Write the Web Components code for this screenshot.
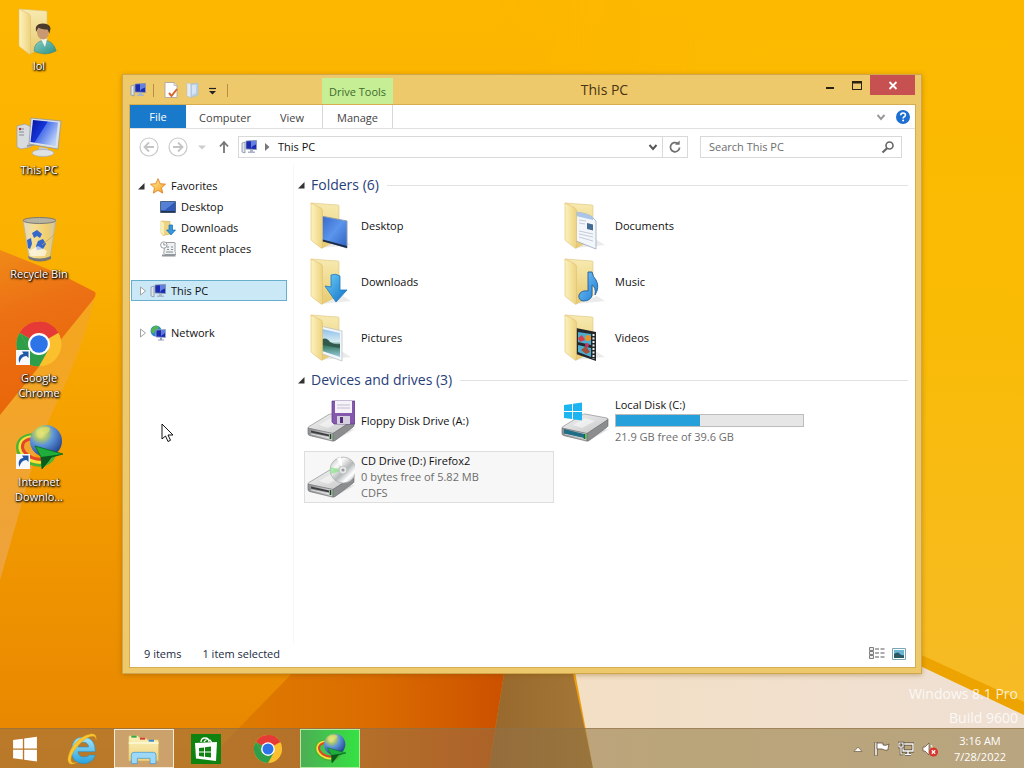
<!DOCTYPE html>
<html lang="en">
<head>
<meta charset="utf-8">
<title>This PC</title>
<style>
html, body { margin: 0; height: 100%; }
body {
  font: 11px/16px "Open Sans", "Noto Sans", sans-serif;
  overflow: hidden;
  background: #fbb300;
}
</style>
</head>
<body>
<win-desktop></win-desktop>
<script>
const folder = `
  <linearGradient id="fb" x2="0" y2="1"><stop stop-color="#f7eab0"/><stop offset="1" stop-color="#e8ca70"/></linearGradient>
  <linearGradient id="ff" x2="1" y2="0"><stop stop-color="#fdf3be"/><stop offset="1" stop-color="#edd27e"/></linearGradient>
  <path d="M14 46l30-3-8-5z" fill="#000" opacity=".08"/>
  <path d="M4 1l27 2q1 0 1 1v34l-17 8z" fill="url(#fb)" stroke="#dcc27a" stroke-width=".6"/>`;
const flap = `<path d="M4 1l10 5q1.500 1 1.500 3v36q0 2-1.500 1L5 39q-1-1-1-2z" fill="url(#ff)" stroke="#dfc072" stroke-width=".6"/>`;
const drive = `
  <linearGradient id="dt" x2="1" y2="1"><stop stop-color="#f4f4f4"/><stop offset="1" stop-color="#c3c4c5"/></linearGradient>
  <linearGradient id="df" x2="1" y2="0"><stop stop-color="#8c8f92"/><stop offset="1" stop-color="#d4d4d4"/></linearGradient>
  <path d="M4 39l22 6 22-13z" opacity=".12"/>
  <path d="M1 31q0-1 1-1.500L21 18q1.500-1 3-1l22 4q1.500.5 1 2L27 36q-1 .7-2 .5L2 32z" fill="url(#dt)" stroke="#8d8f91" stroke-width=".7"/>
  <path d="M12 28l12-7 10 3-13 7z" fill="#fff" opacity=".5"/>
  <path d="M1 31l25 5.500v7.500L2.500 38.500Q1 38 1 36.500z" fill="url(#df)" stroke="#777" stroke-width=".7"/>
  <path d="M26 36.500L47 22.500v6q0 1-1 1.700L28 43.500q-1 .7-2 .5z" fill="#8b8d8f" stroke="#66686a" stroke-width=".6"/>
  <path d="M4 33.500l18 4v2l-18-4z" fill="#3c3e40"/><path d="M4 36.500l18 4v.8l-18-4z" fill="#eee"/>
  <path d="M23.500 37v5" stroke="#333" stroke-width="1.500"/><path d="M25 38v4" stroke="#35c94a" stroke-width=".8"/>`;
const pc16 = `
  <path d="M1 4l3-1v11l-3-1z" fill="#dfe5ec" stroke="#8793a3" stroke-width=".8"/>
  <path d="M5 2l10.500-.5v9L5 10z" fill="#1a2bb0" stroke="#8d9ab5" stroke-width=".8"/>
  <path d="M10 2l5 0v3.500q-4 1-5 4z" fill="#7c9cf0" opacity=".75"/>
  <path d="M9 10.500h3v2h2v1.500H7v-1.500h2z" fill="#a9b5c8"/>`;
const chrome = `
  <circle cx="24" cy="24" r="22.500" fill="#fbc02d"/>
  <path d="M24 24L4.500 12.750A22.500 22.500 0 0 1 43.500 12.750z" fill="#e53a35"/>
  <path d="M24 1.500A22.500 22.500 0 0 1 43.500 13H24z" fill="#e53a35"/>
  <path d="M4.500 12.750A22.500 22.500 0 0 0 24 46.500L33.500 29.500 14.500 29.500z" fill="#2f9e4a"/>
  <path d="M4.500 12.750L14.500 30 24 24z" fill="#2f9e4a"/>
  <circle cx="24" cy="24" r="11" fill="#fff"/><circle cx="24" cy="24" r="8.800" fill="#2d74e8"/>`;
const idm = `
  <radialGradient id="gl" cx=".35" cy=".25" r=".85"><stop stop-color="#f3f3a0"/><stop offset=".25" stop-color="#a9c470"/><stop offset=".45" stop-color="#5e95da"/><stop offset="1" stop-color="#16337f"/></radialGradient>
  <g fill="none"><ellipse cx="21" cy="26" rx="19" ry="14.500" transform="rotate(20 21 26)" stroke="#4bb535" stroke-width="3"/>
  <ellipse cx="21" cy="25.500" rx="16.500" ry="12" transform="rotate(20 21 25.500)" stroke="#f4e33a" stroke-width="3"/>
  <ellipse cx="21" cy="25" rx="14" ry="9.500" transform="rotate(20 21 25)" stroke="#e2452a" stroke-width="3"/></g>
  <circle cx="31" cy="17" r="16" fill="url(#gl)"/>
  <path d="M22 6q8-5 13-2 0 5-6 6-1 5-5 4-4-3-2-8z" fill="#dfe06a" opacity=".7"/>
  <path d="M20 22l28 8-11 3-10 12-1-12z" fill="#1fae3c" stroke="#086821" stroke-width=".8"/>
  <path d="M26 33l22-3-11 3-10 12z" fill="#0a5c1c"/>`;
const shortcut = `<path d="M1 30h14v15H1z" fill="#f8f8fa"/><path d="M4.500 43c-2-5 0-9 4-9l-1.500-2.500h6.500v6.500l-2-2c-4 0-6 3-7 7z" fill="#1e56a8"/>`;

const ICONS = {
  user: [48, folder + flap + `
    <linearGradient id="sh" x2="1" y2="1"><stop stop-color="#86cfc0"/><stop offset="1" stop-color="#2f8f86"/></linearGradient>
    <path d="M19 43q0-9 10-11 10 1 12 11-11 6-22 0z" fill="url(#sh)" stroke="#3b8179" stroke-width=".5"/>
    <path d="M26 31h6l-2 8z" fill="#f2f5f2"/>
    <ellipse cx="28" cy="24" rx="6" ry="7.500" fill="#c99a72"/>
    <path d="M21 24q-2-8 6-8.500 8 0 8.500 5l-1 5-2-4q-6 0-9-2z" fill="#4a3a2a"/>`],
  computer: [48, `
    <linearGradient id="sc" x2="1" y2=".6"><stop stop-color="#0714a0"/><stop offset=".48" stop-color="#1535d8"/><stop offset=".5" stop-color="#4a70ea"/><stop offset="1" stop-color="#b9cff8"/></linearGradient>
    <path d="M2 14l8-2 6 3v20L6 37l-4-2z" fill="#d9dcdf" stroke="#9ba0a6" stroke-width=".7"/>
    <path d="M4 17l5 0M4 20h5M4 23h5" stroke="#858b92"/><circle cx="5" cy="17" r="1.200" fill="#b33"/>
    <path d="M12 34l9-2" stroke="#999" stroke-width="2"/>
    <path d="M16 6l30 3-3 28-29-5z" fill="#dde1e5" stroke="#8f98a1" stroke-width=".8"/>
    <path d="M18 8l25 2.500-2.500 23.500L15.500 30z" fill="url(#sc)"/>
    <path d="M24 35l9 1.500v4l-9-1z" fill="#c5cad0"/><ellipse cx="28" cy="41" rx="11" ry="3.500" fill="#dfe2e5" stroke="#a5abb1" stroke-width=".7"/>`],
  recycle: [48, `
    <linearGradient id="bn" x2="1" y2="0"><stop stop-color="#dcdcdc"/><stop offset=".3" stop-color="#f5e5ae"/><stop offset=".75" stop-color="#eed27e"/><stop offset="1" stop-color="#c7c7c7"/></linearGradient>
    <path d="M8 4h33l-6 38q-10 5-21 0z" fill="url(#bn)" stroke="#b9b3a0" stroke-width=".8" opacity=".88"/>
    <ellipse cx="24.500" cy="4.500" rx="16.500" ry="3" fill="#b8b2a0" stroke="#7d7a70"/>
    <path d="M13 40q11 5 23 0v3q-11 5-22 0z" fill="#777"/>
    <path d="M17 17l5-3 5 4-2 4-3-2-3 2zM12 24l4-2 1 6-2 5-2-1zM21 30l2-5 5-2 3 5-3 5-6 1z" fill="#3467c9"/>
    <path d="M14 35l9-5 9 5-2 5-14 0z" fill="#fff" opacity=".6"/>
    <path d="M27 29l12-10" stroke="#c9a751" stroke-width=".8"/>`],
  chromeLink: [48, chrome + shortcut],
  idmLink: [48, idm + shortcut],
  chrome: [48, chrome],
  idm: [48, idm],
  fDesktop: [48, folder + `
    <linearGradient id="ds" x2="1" y2="1"><stop stop-color="#3765c8"/><stop offset=".5" stop-color="#5b95ec"/><stop offset="1" stop-color="#2f61c2"/></linearGradient>
    <path d="M14 14l26 5v27l-26-8z" fill="url(#ds)" stroke="#8a9fb0"/><path d="M14 37l26 7v2l-26-7z" fill="#1d2c4a"/>` + flap],
  fDownloads: [48, folder + flap + `
    <linearGradient id="ar" x2="1" y2="1"><stop stop-color="#6fd0fa"/><stop offset="1" stop-color="#0f6fc5"/></linearGradient>
    <path d="M24 17q5-2 9 1l0 14h7L29 44 18 28l6 1z" fill="url(#ar)" stroke="#1a78bd" stroke-width=".8"/>`],
  fPictures: [48, folder + `
    <linearGradient id="pi" x2="0" y2="1"><stop stop-color="#8fc0ea"/><stop offset=".45" stop-color="#d6ebf2"/><stop offset=".6" stop-color="#397b62"/><stop offset="1" stop-color="#9ccbe0"/></linearGradient>
    <path d="M13 12l22 5v30l-22-8z" fill="#f4f7fa" stroke="#a9b4bd" stroke-width=".6"/><path d="M15 15l18 4v24l-18-6z" fill="url(#pi)"/><path d="M15 25q5-2 8 3 5 3 10 2v4l-18-3z" fill="#31594d"/>` + flap],
  fDocuments: [48, folder + `
    <path d="M15 10q10 1 15 4l5 5v28l-20-8z" fill="#f3f6fb" stroke="#9ba8bb" stroke-width=".8"/>
    <path d="M15 10q10 1 17 5v3l-17-4z" fill="#a9c6ea"/>
    <path d="M18 18l7 1M18 21l6 1M18 29l14 3M18 32l14 3M18 35l14 4" stroke="#c0c6d2" stroke-width=".9"/>
    <path d="M26 21l6 1.500v6l-6-1.500z" fill="#446b93"/>` + flap],
  fMusic: [48, folder + flap + `
    <linearGradient id="mu" x2="1" y2="1"><stop stop-color="#7fc6f5"/><stop offset="1" stop-color="#1c7fd6"/></linearGradient>
    <path d="M27 14h4q1 5 4 8 4 7-1 15 1-8-3-10v10q-1 6-9 6-5-1-4-6 2-5 9-4z" fill="url(#mu)" stroke="#235f9c" stroke-width=".9"/>`],
  fVideos: [48, folder + `
    <path d="M15 14l20 4v29l-20-7z" fill="#24282d"/>
    <path d="M17 18l13 2v11l-13-3zM17 31l13 3v9l-13-5z" fill="#4daed0"/>
    <path d="M17 24l4-3 3 5-5 2z" fill="#d83e4e"/><circle cx="27" cy="24" r="3" fill="#e5942c"/><path d="M20 36l5-4 4 6-4 2z" fill="#a6503b"/><circle cx="26" cy="31" r="2" fill="#c6346a"/>
    <path d="M32.500 20v25" stroke="#eee" stroke-width="2" stroke-dasharray="2 1.500"/>` + flap],
  floppy: [48, drive + `
    <path d="M25 4h23v23H27l-2-2z" fill="#8459ad" stroke="#5e3b87" stroke-width=".7"/>
    <path d="M28 4h17v12H28z" fill="#f5f3f8"/><path d="M30 8h13M30 11h13" stroke="#c4bad2"/>
    <path d="M30 19h13v8H30z" fill="#d5cfdf"/><path d="M33 20h3v6h-3z" fill="#54327c"/>`],
  cd: [48, drive + `
    <linearGradient id="cg" x2="1" y2="1"><stop stop-color="#aeb2b2"/><stop offset=".3" stop-color="#fafafa"/><stop offset=".55" stop-color="#b4b8b8"/><stop offset=".75" stop-color="#fff"/><stop offset="1" stop-color="#9fa3a3"/></linearGradient>
    <circle cx="36" cy="17" r="13" fill="url(#cg)" stroke="#a9acac" stroke-width=".7"/>
    <path d="M36 17L23.500 14q-.8 4 .5 7z" fill="#7fe07f" opacity=".65"/><path d="M36 17L30 5.500 34 4z" fill="#fff"/>
    <circle cx="36" cy="17" r="4" fill="#e6e8e8" stroke="#b2b5b5" stroke-width=".7"/><circle cx="36" cy="17" r="1.600" fill="#999"/>`],
  local: [48, drive + `
    <path d="M3 32l20 5v4L3 36.500z" fill="#206d86"/><path d="M24.500 37v5" stroke="#42d24e" stroke-width="1.500"/>
    <path d="M3 8l8-1v7H3zM12 6.800L21 5.500V14h-9zM3 15h8v7l-8-1zM12 15h9v8.500L12 22.200z" fill="#1cb5f2"/>`],
  pc: [16, pc16],
  star: [16, `<linearGradient id="st" x2="1" y2="1"><stop stop-color="#fff2a0"/><stop offset="1" stop-color="#f39a1c"/></linearGradient>
    <path d="M8 .7l2.200 5 5.300.5-4 3.600 1.200 5.300L8 12.300l-4.700 2.800 1.200-5.300-4-3.600 5.300-.5z" fill="url(#st)" stroke="#e08226" stroke-width=".9"/>`],
  screen: [16, `<path d="M.5 2.500h15v11H.5z" fill="#3159b8" stroke="#4c6480"/><path d="M1 3h14L5 11H1z" fill="#6d9bea" opacity=".6"/><path d="M1 12h14v1.500H1z" fill="#22344e"/>`],
  down: [16, `<path d="M1 1l9 .5V14l-7 1.500L1 13z" fill="#edd484" stroke="#cfae58" stroke-width=".6"/><path d="M1 1l3 2v12.500L1 13z" fill="#fbeeb2"/><path d="M9 5h3.500v5H15.500l-4.500 5-4.500-5H9z" fill="#3597dc" stroke="#1c6cb0" stroke-width=".7"/>`],
  recent: [16, `<path d="M5 1.500h9q2 0 1 2v7q1 1 1 3H5q-2-1-1-3z" fill="#f0f1f2" stroke="#8e9499" stroke-width=".9"/><circle cx="3.800" cy="4" r="3.200" fill="#fff" stroke="#8e9499" stroke-width=".9"/><path d="M3.800 2v2h1.700M7 6h2M11 6h2M7 8.500h2M11 8.500h2M6 11h7" stroke="#7c8287" fill="none" stroke-width=".9"/><path d="M2 13.500h13.500v2H2z" fill="#8e9499"/>`],
  network: [16, `<circle cx="6" cy="6" r="5.500" fill="#3187c9"/><path d="M2 3q4-4 7-1-1 3-4 3 0 4-3 3-2-2 0-5z" fill="#4fb555"/><path d="M6 5l9.500-.5v8L6 12z" fill="#1a2bb0" stroke="#a3b0c5" stroke-width=".8"/><path d="M11 5h4v3l-4 3z" fill="#7c9cf0" opacity=".7"/><path d="M10 12.500h2v2h2v1H8v-1h2z" fill="#8fa0b8"/>`],
  props: [16, `<path d="M2 .5h9l3 3v12H2z" fill="#fdfdfd" stroke="#a99f9a" stroke-width=".8"/><path d="M11 .5v3h3" fill="#ddd" stroke="#aaa" stroke-width=".6"/><path d="M6 11l2.500 3L14 7" fill="none" stroke="#d8652b" stroke-width="2"/>`],
  newFolder: [16, `<path d="M2 1l4 1v13.500L2 14z" fill="#e4edf6" stroke="#b3c3d4" stroke-width=".5"/><path d="M6 2l7-1v12l-7 2.500z" fill="#b9cfe6" stroke="#a3b9d1" stroke-width=".5"/><path d="M7 3h4v8l-4 2z" fill="#d7e4f1"/>`],
  caret: [16, `<path d="M5 6.500h7" stroke="#222" stroke-width="1.200"/><path d="M5 9h7l-3.500 3.500z" fill="#222"/>`],
  min: [16, `<path d="M4 10h8v2H4z" fill="#2c2112"/>`],
  max: [16, `<path d="M3 4h10v9H3zM4 6.500v5.500h8V6.500z" fill="#2c2112" fill-rule="evenodd"/>`],
  close: [16, `<path d="M4.500 5l7 7M11.500 5l-7 7" stroke="#fff" stroke-width="1.800"/>`],
  chevron: [16, `<path d="M4.500 6l3.500 4 3.500-4" fill="none" stroke="currentColor" stroke-width="1.900"/>`],
  help: [16, `<circle cx="8" cy="8" r="7" fill="#1c6fd0"/><path d="M5.700 6.300q0-2.300 2.400-2.300 2.300 0 2.300 2 0 1.300-1.400 2-.9.500-.9 1.500" fill="none" stroke="#fff" stroke-width="1.600"/><circle cx="8.100" cy="11.600" r="1" fill="#fff"/>`],
  back: [20, `<circle cx="10" cy="10" r="9" fill="none" stroke="#c9c9c9" stroke-width="1.200"/><path d="M15 10H6M10 5.500L5.500 10l4.500 4.500" fill="none" stroke="#c4c4c4" stroke-width="1.800"/>`],
  forward: [20, `<circle cx="10" cy="10" r="9" fill="none" stroke="#c9c9c9" stroke-width="1.200"/><path d="M5 10h9M10 5.500l4.500 4.500-4.500 4.500" fill="none" stroke="#c4c4c4" stroke-width="1.800"/>`],
  tinyDown: [16, `<path d="M4 6.500h8l-4 4z" fill="#cdcdcd"/>`],
  up: [16, `<path d="M8 14V3M4 7.500L8 3l4 4.500" fill="none" stroke="#757575" stroke-width="1.800"/>`],
  crumb: [16, `<path d="M6 4l4.500 4L6 12z" fill="#777"/>`],
  refresh: [16, `<path d="M10.800 4.500a4.600 4.600 0 1 0 1.800 4" fill="none" stroke="#707070" stroke-width="1.700"/><path d="M8 5.800h4.700V1.500z" fill="#707070"/>`],
  search: [16, `<circle cx="9.500" cy="6.500" r="3.500" fill="none" stroke="#666" stroke-width="1.600"/><path d="M7 9.300L2.500 13.500" stroke="#666" stroke-width="2.200"/>`],
  open: [16, `<path d="M10.500 5v6.500H4z" fill="#333"/>`],
  closed: [16, `<path d="M6.500 4l5 4-5 4z" fill="#fff" stroke="#a3a3a3"/>`],
  details: [16, `<path d="M.5 1.500h4v3h-4zM.5 5.500h4v3h-4zM.5 9.500h4v3h-4z" fill="#eee" stroke="#6f6f6f" stroke-width=".9"/><path d="M6 3h4M11.500 3h4M6 7h4M11.500 7h4M6 11h4M11.500 11h4" stroke="#5b5b5b" stroke-width="1.200"/>`],
  tiles: [16, `<path d="M1.500 2.500h13v11h-13z" fill="#fff" stroke="#7aa5b5"/><path d="M3 4h10v8H3z" fill="#68b4d4"/><path d="M3 8q4-3 6 0 2 2 4 1v3H3z" fill="#2a5864"/>`],
  start: [48, `<path d="M2 7.500l18-2.500v18H2zM22.500 4.700L46 1.500V23H22.500zM2 25.500h18v18L2 41zM22.500 25.500H46v21.500L22.500 43.800z" fill="#fff"/>`],
  ie: [48, `<linearGradient id="ie" x2="0" y2="1"><stop stop-color="#a4e6fa"/><stop offset="1" stop-color="#2aa3df"/></linearGradient>
    <path d="M44 28H18q1 8 9 8 6 0 8-3h9q-4 13-18 13Q8 45 8 26 9 6 26 6q18 1 18 22zM18 21H34q-1-7-8-7-7 0-8 7z" fill="url(#ie)" stroke="#2a86b8" stroke-width=".8" fill-rule="evenodd"/>
    <path d="M45 11q2-10-7-10Q19 4 7 25-2 45 8 47q4 0 9-3-7 2-9-1Q5 34 18 19 32 4 41 5q4 1 4 6z" fill="#f9c531" stroke="#d79a17" stroke-width=".6"/>`],
  explorer: [48, `<linearGradient id="ex" x2="0" y2="1"><stop stop-color="#fbf2bd"/><stop offset="1" stop-color="#eed27c"/></linearGradient>
    <path d="M1 6q0-2 2-2h12l2 3h10l2 3h15q2 0 2 2v30H1z" fill="url(#ex)" stroke="#d5b45a"/>
    <path d="M5 4h8v3H5z" fill="#38a845"/><path d="M18 7h8v3h-8z" fill="#d33c33"/><path d="M31 10h8v3h-8z" fill="#3686d1"/><path d="M1 15h45" stroke="#fffbe0" stroke-width="2"/>
    <path d="M5 46V33q0-4 4-4h29q4 0 4 4v13h-9V38H14v8z" fill="#9dd8f6" stroke="#3f93cc"/>`],
  store: [30, `<path d="M0 0h30v30H0z" fill="#10820f"/><path d="M10 8q0-4 4-4t4 4M13 8q2-4 6-2l2 3" fill="none" stroke="#fff" stroke-width="1.300"/><path d="M4 9l22-1-1 19-20-2.500z" fill="#fff"/><path d="M8 14l5-.6v4.100H8zM14 13.200l6-.7v5h-6zM8 18.500h5v4.200l-5-.6zM14 18.500h6v5l-6-.7z" fill="#10820f"/>`],
  trayUp: [16, `<path d="M4 10.500h8L8 6z" fill="#fff" stroke="#6b5b46" stroke-width=".7"/>`],
  flag: [16, `<path d="M2 1v14" stroke="#5d4d39" stroke-width="3"/><path d="M2 1.500v13" stroke="#fff" stroke-width="1.600"/><path d="M3 2h6v2q3 1 6-1-1 4-1 6-3 1-6-1H3z" fill="#fff" stroke="#5d4d39" stroke-width=".8"/>`],
  net: [16, `<path d="M5 3h10v7H5zM10 10v3M7 13.500h6" fill="none" stroke="#4f4333" stroke-width="2.800"/><path d="M5 3h10v7H5zM10 10v3M7 13.500h6" fill="none" stroke="#fff" stroke-width="1.400"/><path d="M1 2h4v4H1zM3 6v7h2" fill="none" stroke="#4f4333" stroke-width="2.400"/><path d="M1 2h4v4H1zM3 6v7h2" fill="none" stroke="#fff" stroke-width="1.200"/>`],
  mute: [16, `<path d="M1 6h2l4-4v12l-4-4H1z" fill="#fff" stroke="#5d4d39" stroke-width=".7"/><path d="M9 4q2 2 1 5" stroke="#fff" fill="none"/><circle cx="11.500" cy="11" r="4.500" fill="#d8352c"/><path d="M9.800 9.300l3.400 3.400M13.200 9.300l-3.400 3.400" stroke="#fff" stroke-width="1.300"/>`],
  cursor: [20, `<path d="M1 1v15l3.500-3L7 18.500l2.500-1.200L7 12h5z" fill="#fff" stroke="#111" stroke-width="1"/>`]
};

function define(name, html) {
  customElements.define(name, class extends HTMLElement {
    connectedCallback() {
      if (this.shadowRoot) return;
      const t = document.createElement('template');
      t.innerHTML = typeof html === 'function' ? html(this) : html;
      this.attachShadow({ mode: 'open' }).append(t.content.cloneNode(true));
    }
  });
}
const a = (el, n) => el.getAttribute(n) || '';

define('ui-icon', el => {
  const [box, art] = ICONS[a(el, 'name')];
  const size = a(el, 'size') || box;
  return `<style>:host{display:inline-block;flex:none;width:${size}px;height:${size}px}svg{display:block;width:100%;height:100%}</style>
  <svg viewBox="0 0 ${box} ${box}" aria-hidden="true">${art}</svg>`;
});

define('wall-paper', `<style>:host{display:block;position:absolute;inset:0;z-index:-1}svg{display:block;width:100%;height:100%}</style>
<svg viewBox="0 0 1024 768" preserveAspectRatio="none" aria-hidden="true">
  <defs>
    <linearGradient id="bg" x2="0" y2="1"><stop stop-color="#fdb700"/><stop offset=".35" stop-color="#fab000"/><stop offset=".62" stop-color="#f39c00"/><stop offset="1" stop-color="#e78500"/></linearGradient>
    <linearGradient id="leaf" x2=".2" y2="1"><stop stop-color="#f08a18"/><stop offset=".4" stop-color="#ec7014"/><stop offset="1" stop-color="#e86608"/></linearGradient>
    <linearGradient id="band" x2="0" y2="1"><stop stop-color="#f5a61c"/><stop offset=".5" stop-color="#f2a52c"/><stop offset="1" stop-color="#eda23e"/></linearGradient>
    <linearGradient id="red" x2="1" y2="0"><stop stop-color="#df7e00"/><stop offset=".55" stop-color="#db6d00"/><stop offset="1" stop-color="#cb5000"/></linearGradient>
    <linearGradient id="brown" x2="1" y2="0"><stop stop-color="#98682c"/><stop offset="1" stop-color="#a47838"/></linearGradient>
    <linearGradient id="cream" x2="1" y2="0"><stop stop-color="#f3dfc4"/><stop offset="1" stop-color="#efe0d4"/></linearGradient>
    <linearGradient id="side" x2="0" y2="1"><stop stop-color="#fcb900"/><stop offset=".4" stop-color="#fabb04"/><stop offset="1" stop-color="#f5bb2c"/></linearGradient>
    <linearGradient id="fade" x2="1" y2="0"><stop stop-color="#fff" stop-opacity="0"/><stop offset=".4" stop-color="#fff"/></linearGradient>
    <mask id="right"><path d="M500 0h524v768H500z" fill="url(#fade)"/></mask>
  </defs>
  <path fill="url(#bg)" d="M0 0h1024v768H0z"/>
  <path fill="url(#side)" d="M500 0h524v768H500z" mask="url(#right)"/>
  <path fill="url(#band)" d="M95 297Q82 350 58 400 38 440 20 510L0 580V400z"/>
  <path fill="url(#leaf)" d="M0 250l60 24 35 18q2 3-3 9L0 415z"/>
  <path fill="url(#red)" d="M310 655h197l-18 113H200z"/>
  <path fill="url(#brown)" d="M507 655h62l24 113H489z"/>
  <path fill="url(#cream)" d="M569 640h310l145 72v56H593z"/>
  <path fill="#eda400" d="M880 636l144 66v13L880 647z"/>
</svg>`);

define('desk-icon', el => `<style>
:host{display:block}
a{display:flex;flex-direction:column;align-items:center;gap:2px;height:104px;color:#fff;text-decoration:none;text-align:center;line-height:15px;
 text-shadow:1px 1px 2px #000,0 1px 2px #000,1px 0 1px #000a}
</style><a href="#${a(el, 'icon')}"><ui-icon name="${a(el, 'icon')}"></ui-icon><span><slot></slot></span></a>`);

define('tool-button', el => `<style>
:host{display:flex}
button{flex:1;display:flex;align-items:center;justify-content:center;width:100%;height:100%;margin:0;padding:0;border:0;background:none;color:inherit;font:inherit}
</style><button type="button" aria-label="${a(el, 'label')}"><ui-icon name="${a(el, 'icon')}" ${a(el, 'size') ? `size="${a(el, 'size')}"` : ''}></ui-icon></button>`);

define('title-bar', `<style>
:host{display:flex;height:30px;color:#4b3413}
.quick{display:flex;align-items:center;width:192px}
.quick tool-button{width:22px}
.quick .app{width:16px}
i{width:1px;height:13px;margin:0 6px 0 7px;background:#b98b45}
.tools{box-sizing:border-box;width:71px;height:27px;margin-top:3px;background:#c5ee95;color:#3f6b2c;text-align:center;line-height:27px}
h1{flex:1;margin:0;text-align:center;font-size:14px;font-weight:400;line-height:30px}
.caption{display:flex;height:20px}
.caption tool-button{width:27px}
.caption .close{width:45px;background:#c75050}
</style>
<div class="quick"><tool-button class="app" icon="pc" label="System menu"></tool-button><i></i>
<tool-button icon="props" label="Properties"></tool-button><tool-button icon="newFolder" label="New folder"></tool-button><tool-button class="app" icon="caret" label="Customize toolbar"></tool-button><i></i></div>
<div class="tools">Drive Tools</div><h1>This PC</h1>
<div class="caption"><tool-button icon="min" label="Minimize"></tool-button><tool-button icon="max" label="Maximize"></tool-button><tool-button class="close" icon="close" label="Close"></tool-button></div>`);

define('ribbon-tabs', `<style>
:host{display:flex;align-items:center;height:23px;border-bottom:1px solid #dfe0e2;color:#444}
button{height:23px;margin:0;padding:2px 0 0;border:0;background:none;font:inherit;color:inherit;text-align:center}
.file{width:56px;padding:0;background:#1979ca;color:#fff}
.c{width:78px}.v{width:56px}
.m{box-sizing:border-box;width:71px;margin-left:2px;border:solid #d8d8d8;border-width:0 1px}
.end{display:flex;gap:6px;margin:0 4px 0 auto;color:#999}
</style>
<button class="file" type="button">File</button><button class="c" type="button">Computer</button><button class="v" type="button">View</button><button class="m" type="button">Manage</button>
<div class="end"><tool-button icon="chevron" label="Minimize the ribbon"></tool-button><tool-button icon="help" label="Help"></tool-button></div>`);

define('address-row', `<style>
:host{display:flex;align-items:center;height:36px;padding:0 13px 0 9px;color:#111}
.fwd{margin-left:9px}.drop{margin-left:6px}.up{margin:0 6px}
.bar,.search{box-sizing:border-box;display:flex;align-items:center;height:22px;border:1px solid #d9d9d9;background:#fff}
.bar{flex:1;padding-left:2px}
.bar button{padding:0;border:0;background:none;font:inherit;color:inherit}
.bar .crumb{margin:0 3px 0 2px}
.list{margin:0 1px 0 auto;color:#555}
.refresh{width:24px;height:20px;border-left:1px solid #d9d9d9}
.search{width:202px;margin-left:12px;padding:0 5px 0 8px}
input{flex:1;min-width:0;padding:0;border:0;outline:0;background:none;font:inherit;color:#333}
input::placeholder{color:#6d6d6d;opacity:1}
</style>
<tool-button icon="back" label="Back"></tool-button><tool-button class="fwd" icon="forward" label="Forward"></tool-button><tool-button class="drop" icon="tinyDown" label="Recent locations"></tool-button><tool-button class="up" icon="up" label="Up"></tool-button>
<div class="bar"><ui-icon name="pc"></ui-icon><ui-icon class="crumb" name="crumb"></ui-icon><button type="button">This PC</button>
<tool-button class="list" icon="chevron" label="Previous locations"></tool-button><tool-button class="refresh" icon="refresh" label="Refresh"></tool-button></div>
<div class="search"><input type="search" aria-label="Search This PC" placeholder="Search This PC"><tool-button icon="search" label="Search"></tool-button></div>`);

define('tree-item', el => `<style>
:host{display:block}
a{box-sizing:border-box;display:flex;align-items:center;height:21px;padding-left:${el.hasAttribute('child') ? 28 : 2}px;border:1px solid transparent;color:#111;text-decoration:none;white-space:nowrap}
:host([selected]) a{background:#cbe8f6;border-color:#68aecd}
:host([gap]){margin-top:21px}
span{margin-left:5px}
</style><a href="#${a(el, 'icon')}">${a(el, 'arrow') ? `<ui-icon name="${a(el, 'arrow')}"></ui-icon>` : ''}<ui-icon name="${a(el, 'icon')}"></ui-icon><span><slot></slot></span></a>`);

define('nav-pane', `<style>
:host{display:block;box-sizing:border-box;width:164px;padding:10px 6px 0 1px;border-right:1px solid #f7f7f7}
nav{display:block}
</style><nav aria-label="Locations">
<tree-item arrow="open" icon="star">Favorites</tree-item>
<tree-item child icon="screen">Desktop</tree-item>
<tree-item child icon="down">Downloads</tree-item>
<tree-item child icon="recent">Recent places</tree-item>
<tree-item gap selected arrow="closed" icon="pc">This PC</tree-item>
<tree-item gap arrow="closed" icon="network">Network</tree-item>
</nav>`);

define('file-tile', el => `<style>
:host{display:flex;align-items:center;box-sizing:border-box;height:52px;padding:0 2px;gap:6px;border:1px solid transparent;color:#111}
:host([selected]){background:#f7f7f7;border-color:#dedede}
div{flex:1}
::slotted(*){color:#6d6d6d;display:block}
</style><ui-icon name="${a(el, 'icon')}"></ui-icon><div>${a(el, 'name')}<slot></slot></div>`);

define('capacity-bar', `<style>
:host{display:block}
progress{appearance:none;display:block;box-sizing:border-box;width:189px;height:13px;margin:1px 0 2px;border:1px solid #bcbcbc}
progress::-webkit-progress-bar{background:#e6e6e6}
progress::-webkit-progress-value{background:#26a0da}
</style><progress max="100" value="45" aria-label="Space used"></progress>`);

define('tile-group', el => `<style>
:host{display:block;margin-bottom:3px}
h2{display:flex;align-items:center;height:26px;margin:0 0 2px;color:#27407a;font-size:14px;font-weight:400;line-height:26px}
h2 span{margin:0 8px 0 1px}
h2::after{content:"";flex:1;height:1px;background:#e2e2e2}
.grid{display:grid;grid-template-columns:repeat(auto-fill,250px);gap:4px;padding-left:10px}
</style><h2><ui-icon name="open"></ui-icon><span>${a(el, 'heading')}</span></h2><div class="grid"><slot></slot></div>`);

define('status-bar', `<style>
:host{display:flex;align-items:center;gap:21px;height:22px;padding:0 8px 2px 14px;color:#222b40}
.views{display:flex;gap:6px;margin-left:auto}
</style><span>9 items</span><span>1 item selected</span><div class="views"><tool-button icon="details" label="Details"></tool-button><tool-button icon="tiles" label="Large icons"></tool-button></div>`);

define('explorer-window', `<style>
:host{display:flex;flex-direction:column;box-sizing:border-box;padding:0 6px 6px 7px;border:1px solid #cfa64e;background:#edc96c;box-shadow:0 1px 5px #7a500066}
.body{flex:1;display:flex;flex-direction:column;min-height:0;background:#fff;outline:1px solid #d6ac50}
.split{flex:1;display:flex;min-height:0}
main{flex:1;min-width:0;padding:7px 7px 0 0}
</style>
<title-bar></title-bar>
<div class="body"><ribbon-tabs></ribbon-tabs><address-row></address-row>
<div class="split"><nav-pane></nav-pane><main>
<tile-group heading="Folders (6)">
<file-tile icon="fDesktop" name="Desktop"></file-tile><file-tile icon="fDocuments" name="Documents"></file-tile>
<file-tile icon="fDownloads" name="Downloads"></file-tile><file-tile icon="fMusic" name="Music"></file-tile>
<file-tile icon="fPictures" name="Pictures"></file-tile><file-tile icon="fVideos" name="Videos"></file-tile>
</tile-group>
<tile-group heading="Devices and drives (3)">
<file-tile icon="floppy" name="Floppy Disk Drive (A:)"></file-tile>
<file-tile icon="local" name="Local Disk (C:)"><capacity-bar></capacity-bar><span>21.9 GB free of 39.6 GB</span></file-tile>
<file-tile selected icon="cd" name="CD Drive (D:) Firefox2"><span>0 bytes free of 5.82 MB</span><span>CDFS</span></file-tile>
</tile-group>
</main></div>
<status-bar></status-bar></div>`);

define('task-bar', `<style>
:host{display:flex;box-sizing:border-box;height:40px;border-top:1px solid #8f704499;background:linear-gradient(90deg,#936f4b8c,#936f4b8c 45%,#8c74398c 65%);color:#fff}
.apps{display:flex;gap:2px}
.apps tool-button{box-sizing:border-box;width:60px;height:39px}
.apps .start{width:50px}
.apps .active{border:1px solid #f5ead6;background:#d8bd9999}
.apps .busy{border:1px solid #b5e8a0;background:linear-gradient(90deg,#4cae54,#35e243)}
.tray{display:flex;align-items:center;gap:8px;margin-left:auto;padding-right:17px}
time{width:54px;margin-left:7px;text-align:center;white-space:nowrap}
</style>
<div class="apps"><tool-button class="start" icon="start" size="26" label="Start"></tool-button><tool-button icon="ie" size="32" label="Internet Explorer"></tool-button><tool-button class="active" icon="explorer" size="32" label="File Explorer"></tool-button><tool-button icon="store" label="Store"></tool-button><tool-button icon="chrome" size="30" label="Google Chrome"></tool-button><tool-button class="busy" icon="idm" size="32" label="Download manager"></tool-button></div>
<div class="tray"><tool-button icon="trayUp" label="Show hidden icons"></tool-button><tool-button icon="flag" label="Action Center"></tool-button><tool-button icon="net" label="Network"></tool-button><tool-button icon="mute" label="Volume"></tool-button><time datetime="2022-07-28T03:16">3:16 AM<br>7/28/2022</time></div>`);

define('win-desktop', `<style>
:host{position:relative;isolation:isolate;display:flex;flex-direction:column;height:100vh;overflow:hidden}
.area{position:relative;flex:1;min-height:0}
.icons{width:78px;padding-top:8px}
explorer-window{position:absolute;inset:74px 102px 54px 122px}
.mark{position:absolute;right:6px;bottom:-2px;color:#fffc;font-size:14px;line-height:24px;text-align:right}
.pointer{position:absolute;left:161px;top:423px}
</style>
<wall-paper></wall-paper>
<div class="area">
<div class="icons"><desk-icon icon="user">lol</desk-icon><desk-icon icon="computer">This PC</desk-icon><desk-icon icon="recycle">Recycle Bin</desk-icon><desk-icon icon="chromeLink">Google<br>Chrome</desk-icon><desk-icon icon="idmLink">Internet<br>Downlo...</desk-icon></div>
<div class="mark">Windows 8.1 Pro<br>Build 9600</div>
<explorer-window></explorer-window>
<ui-icon class="pointer" name="cursor"></ui-icon>
</div>
<task-bar></task-bar>`);
</script>
</body>
</html>
